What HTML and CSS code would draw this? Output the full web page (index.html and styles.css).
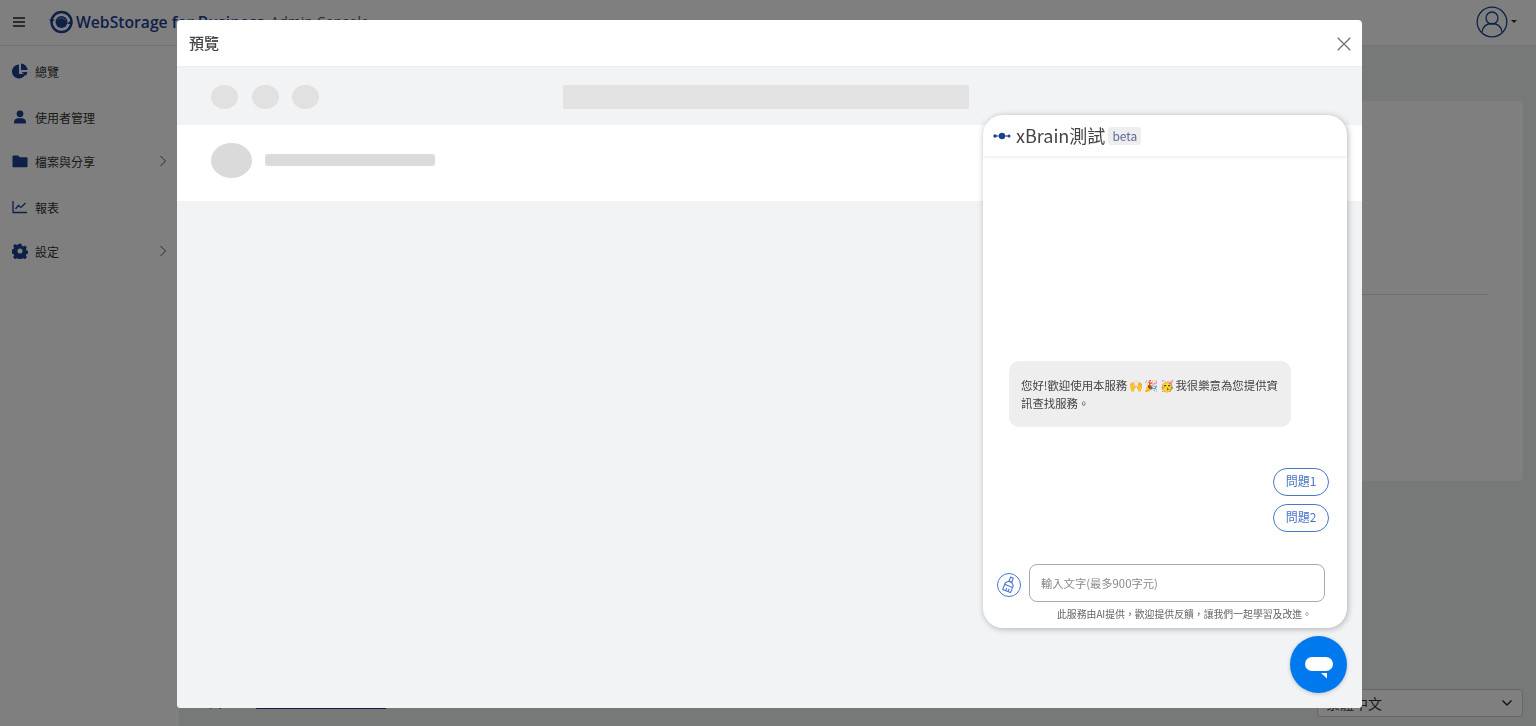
FILE: index.html
```html
<!DOCTYPE html>
<html lang="zh-Hant">
<head>
<meta charset="utf-8">
<title>WebStorage for Business Admin Console</title>
<link rel="stylesheet" href="styles.css">
</head>
<body>
<div class="app">
  <header class="topbar">
    <svg class="menu-icon" viewBox="0 0 12 10" width="12" height="10"><path d="M0 1h12M0 5h12M0 9h12" stroke="#222" stroke-width="1.6"/></svg>
    <svg class="logo" viewBox="0 0 24 24" width="24" height="24">
      <circle cx="12.500" cy="12" r="10" fill="none" stroke="#1d4191" stroke-width="2.400"/>
      <circle cx="12.500" cy="12" r="6" fill="#1d4191"/>
      <path d="M9 9.500a4.500 4.500 0 0 1 7.500 1" fill="none" stroke="#8a97b5" stroke-width=".9"/>
      <path d="M0 9.500l3 3 3-3zM18 14l3-3 3 3z" fill="#1d4191"/>
    </svg>
    <span class="brand">WebStorage for Business</span>
    <span class="brand-sub">Admin Console</span>
    <span class="top-spacer"></span>
    <svg class="avatar" viewBox="0 0 32 32" width="32" height="32">
      <circle cx="16" cy="16" r="14.800" fill="none" stroke="#1d4191" stroke-width="1.300"/>
      <circle cx="16" cy="12" r="6" fill="none" stroke="#1d4191" stroke-width="1.300"/>
      <path d="M6 26c1-6 5-8.500 10-8.500s9 2.500 10 8.500" fill="none" stroke="#1d4191" stroke-width="1.300"/>
    </svg>
    <span class="caret"></span>
  </header>
  <div class="layout">
    <nav class="sidebar">
      <a class="nav-item nav-a">
        <svg viewBox="0 0 16 16" width="16" height="16"><path d="M7 1.500a7 7 0 1 0 6.500 9.500H7z" fill="#1d4191"/><path d="M9 .5a7 7 0 0 1 6.500 6.500H9z" fill="#1d4191"/><path d="M9.500 9h5.800a7 7 0 0 1-1.400 3.800z" fill="#1d4191"/></svg>
        <span>總覽</span>
      </a>
      <a class="nav-item nav-b">
        <svg viewBox="0 0 16 16" width="16" height="16"><circle cx="8" cy="4.800" r="3.400" fill="#1d4191"/><path d="M2 14.500v-1.200C2 10.500 4 9.200 6 9.200h4c2 0 4 1.300 4 4.100v1.200z" fill="#1d4191"/></svg>
        <span>使用者管理</span>
      </a>
      <a class="nav-item nav-c">
        <svg viewBox="0 0 16 16" width="16" height="16"><path d="M1.500 2.500h4.700l1.500 1.700h6.800c.5 0 1 .5 1 1v8c0 .6-.5 1-1 1H1.500c-.5 0-1-.4-1-1V3.500c0-.5.5-1 1-1z" fill="#1d4191"/></svg>
        <span>檔案與分享</span>
        <svg class="chev" viewBox="0 0 8 12" width="8" height="12"><path d="M1.500 1l5 5-5 5" fill="none" stroke="#555" stroke-width="1"/></svg>
      </a>
      <a class="nav-item nav-d">
        <svg viewBox="0 0 16 16" width="16" height="16"><path d="M1 2v11.500h14" fill="none" stroke="#1d4191" stroke-width="1.300"/><path d="M3.500 10l3-3.500 2.500 2 4.500-4.500" fill="none" stroke="#1d4191" stroke-width="1.300"/></svg>
        <span>報表</span>
      </a>
      <a class="nav-item nav-e">
        <svg viewBox="0 0 16 16" width="16" height="16"><path fill-rule="evenodd" d="M6.600.8h2.800l.4 2 1.300.6 1.800-1 2 2-1 1.800.6 1.300 2 .4v2.800l-2 .4-.6 1.300 1 1.800-2 2-1.800-1-1.300.6-.4 2H6.600l-.4-2-1.300-.6-1.800 1-2-2 1-1.800-.6-1.300-2-.4V6.500l2-.4.6-1.300-1-1.800 2-2 1.800 1 1.300-.6zM8 5.500a2.500 2.500 0 1 0 0 5 2.500 2.500 0 0 0 0-5z" fill="#1d4191"/></svg>
        <span>設定</span>
        <svg class="chev" viewBox="0 0 8 12" width="8" height="12"><path d="M1.500 1l5 5-5 5" fill="none" stroke="#555" stroke-width="1"/></svg>
      </a>
    </nav>
    <main class="content">
      <section class="card"><div class="card-rule"></div></section>
      <div class="footer-row">
        <span class="foot-label">共 0</span>
        <span class="foot-link">隱私權政策與服務條款</span>
        <span class="foot-label">©</span>
        <span class="top-spacer"></span>
        <div class="lang-select">
          <span>繁體中文</span>
          <svg viewBox="0 0 12 8" width="12" height="8"><path d="M1.500 1.500L6 6l4.500-4.500" fill="none" stroke="#222" stroke-width="1.400"/></svg>
        </div>
      </div>
    </main>
  </div>
</div>
<div class="backdrop"></div>
<div class="modal">
  <div class="modal-head">
    <h1 class="modal-title">預覽</h1>
    <svg class="close" viewBox="0 0 14 14" width="14" height="14"><path d="M.7.7l12.600 12.600M13.300.7L.7 13.300" stroke="#777" stroke-width="1.400"/></svg>
  </div>
  <div class="modal-body">
    <div class="sk-bar">
      <i class="sk-dot"></i><i class="sk-dot"></i><i class="sk-dot"></i>
      <i class="sk-search"></i>
    </div>
    <div class="sk-row">
      <i class="sk-avatar"></i>
      <i class="sk-line"></i>
    </div>
    <section class="chat">
      <div class="chat-head">
        <svg class="chat-logo" viewBox="0 0 18 8" width="18" height="8"><path d="M1 4h16" stroke="#1d4191" stroke-width="1.200"/><circle cx="9" cy="4" r="3.200" fill="#1d4191"/><circle cx="2" cy="4" r="1.700" fill="#1d4191"/><circle cx="16" cy="4" r="1.500" fill="#1d4191"/></svg>
        <span class="chat-title">xBrain測試</span>
        <span class="beta">beta</span>
      </div>
      <div class="chat-body">
        <div class="bubble">您好!歡迎使用本服務 🙌 🎉 🥳 我很樂意為您提供資訊查找服務。</div>
        <div class="prompts">
          <button class="prompt">問題1</button>
          <button class="prompt">問題2</button>
        </div>
      </div>
      <div class="chat-input-row">
        <span class="broom">
          <svg viewBox="0 0 24 24" width="24" height="24">
            <circle cx="12" cy="12" r="11.500" fill="none" stroke="#4a76c8" stroke-width="1"/>
            <g transform="rotate(22 12 12)" fill="none" stroke="#4a76c8" stroke-width="1.100" stroke-linejoin="round">
              <path d="M10.500 4h3v4.500h-3z"/>
              <path d="M10.500 8.500h3l2.700 2.500v7.500H7.800V11z"/>
              <path d="M7.800 13h8.400M11 15.500v3M13.500 15.500v3"/>
            </g>
          </svg>
        </span>
        <div class="chat-input">輸入文字(最多900字元)</div>
      </div>
      <p class="chat-note">此服務由AI提供&#xFF0C;歡迎提供反饋&#xFF0C;讓我們一起學習及改進&#x3002;</p>
    </section>
    <button class="fab">
      <svg viewBox="0 0 28 22" width="28" height="22"><rect x="0" y="0" width="28" height="14" rx="7" fill="#fff"/><path d="M16 16h6v5.500z" fill="#fff"/></svg>
    </button>
  </div>
</div>
</body>
</html>
```

FILE: styles.css
```css
* { box-sizing: border-box; }
html, body { height: 100%; }
body {
  margin: 0;
  overflow: hidden;
  font-family: "Noto Sans CJK TC", "Noto Sans", sans-serif;
  color: #333;
  background: #eff2f1;
}
.app { height: 726px; display: flex; flex-direction: column; }
.topbar {
  height: 46px;
  flex: none;
  display: flex;
  align-items: center;
  padding: 0 19px 2px 13px;
  background: #fff;
  border-bottom: 1px solid #e6e6e6;
}
.menu-icon { margin-right: 24px; }
.logo { margin-right: 3px; }
.brand {
  font-family: "Open Sans", sans-serif;
  font-weight: 600;
  font-size: 15.700px;
  color: #1d4191;
}
.brand-sub {
  font-family: "Open Sans", sans-serif;
  font-size: 14px;
  color: #555;
  margin-left: 6px;
}
.top-spacer { flex: 1; }
.avatar { margin-right: 3px; }
.caret {
  width: 0;
  height: 0;
  border: 3.500px solid transparent;
  border-top-color: #333;
  border-bottom: 0;
}
.layout { flex: 1; display: flex; min-height: 0; }
.sidebar {
  width: 179px;
  flex: none;
  background: #fff;
  padding: 3px 12px 0 12px;
  display: flex;
  flex-direction: column;
}
.nav-item {
  display: flex;
  align-items: center;
  gap: 7px;
  height: 44px;
  font-size: 12px;
  color: #333;
}
.nav-item span { flex: 1; }
.nav-a { margin-bottom: 2px; }
.nav-c { margin-bottom: 2px; }
.chev { flex: none; }
.content {
  flex: 1;
  min-width: 0;
  display: flex;
  flex-direction: column;
  padding: 55px 13px 9px 0;
}
.card {
  height: 380px;
  flex: none;
  background: #fff;
  border-radius: 4px;
  padding-top: 193px;
}
.card-rule { margin-right: 35px; height: 1px; background: #ddd; }
.footer-row {
  margin-top: auto;
  display: flex;
  align-items: center;
  height: 28px;
  font-size: 13px;
  padding-left: 30px;
  gap: 8px;
}
.foot-link { color: #1d4191; text-decoration: underline; margin: 0 16px 3px 16px; }
.foot-label { margin-bottom: 3px; }
.lang-select {
  width: 206px;
  height: 28px;
  display: flex;
  align-items: center;
  justify-content: space-between;
  padding: 0 9px 0 8px;
  border: 1px solid #ccc;
  border-radius: 4px;
  font-size: 14px;
  background: #fff;
}
.backdrop {
  position: fixed;
  inset: 0;
  background: rgba(0, 0, 0, .5);
}
.modal {
  position: fixed;
  left: 177px;
  top: 20px;
  width: 1185px;
  height: 688px;
  background: #fff;
  border-radius: 4px;
  display: flex;
  flex-direction: column;
  overflow: hidden;
}
.modal-head {
  height: 47px;
  flex: none;
  display: flex;
  align-items: center;
  justify-content: space-between;
  padding: 0 11px 2px 12px;
  border-bottom: 1px solid #ebedf0;
}
.modal-title { margin: 0; font-size: 15px; font-weight: 500; color: #444; }
.close { margin-top: 4px; }
.modal-body { flex: 1; position: relative; background: #f2f3f5; }
.sk-bar {
  height: 58px;
  display: flex;
  align-items: flex-start;
  gap: 13.500px;
  padding: 18px 0 0 34px;
}
.sk-dot { width: 27px; height: 24px; border-radius: 50%; background: #e1e1e1; }
.sk-search { width: 406px; height: 24px; margin-left: 230px; border-radius: 2px; background: #e3e3e3; }
.sk-row {
  height: 76px;
  background: #fff;
  display: flex;
  align-items: center;
  gap: 13px;
  padding: 0 0 6px 34px;
}
.sk-avatar { width: 41px; height: 35px; border-radius: 50%; background: #dadada; }
.sk-line { width: 170px; height: 12px; border-radius: 3px; background: #dadada; }
.chat {
  position: absolute;
  left: 806px;
  top: 48px;
  width: 364px;
  height: 513px;
  background: #fff;
  border-radius: 20px;
  box-shadow: 1px 1px 6px rgba(0, 0, 0, .28);
  display: flex;
  flex-direction: column;
}
.chat-head {
  height: 41px;
  flex: none;
  display: flex;
  align-items: center;
  padding: 0 10px;
  box-shadow: 0 2px 3px rgba(0, 0, 0, .06);
}
.chat-logo { margin-right: 5px; }
.chat-title { font-size: 18px; color: #444; line-height: 1; padding-bottom: 2px; }
.beta {
  margin-left: 3px;
  width: 33px;
  height: 18px;
  border-radius: 3px;
  background: #eeeeee;
  color: #5d6a9a;
  font-size: 12px;
  line-height: 18px;
  text-align: center;
}
.chat-body {
  flex: 1;
  display: flex;
  flex-direction: column;
  justify-content: flex-end;
  padding: 0 18px 32px 26px;
}
.bubble {
  width: 282px;
  height: 66px;
  padding: 15px 12px 0;
  border-radius: 10px;
  background: #eee;
  font-size: 11.400px;
  line-height: 18px;
  word-spacing: -1px;
  color: #444;
  margin-bottom: 41px;
}
.prompts { display: flex; flex-direction: column; align-items: flex-end; gap: 8px; }
.prompt {
  width: 56px;
  height: 28px;
  padding: 0 0 3px;
  border: 1px solid #4a76c8;
  border-radius: 14px;
  background: #fff;
  color: #4a76c8;
  font: 12px "Noto Sans CJK TC", sans-serif;
}
.chat-input-row {
  flex: none;
  display: flex;
  align-items: center;
  gap: 8px;
  padding: 0 22px 0 14px;
}
.broom { height: 24px; margin-top: 4px; }
.chat-input {
  flex: 1;
  height: 38px;
  padding-left: 11px;
  border: 1px solid #aaa;
  border-radius: 8px;
  font-size: 11.300px;
  line-height: 36px;
  color: #888;
}
.chat-note {
  margin: 4px 0 6px 74px;
  font-size: 9.850px;
  line-height: 16px;
  color: #666;
  white-space: nowrap;
}
.fab {
  position: absolute;
  left: 1113px;
  top: 569px;
  width: 57px;
  height: 57px;
  padding: 6px 0 0;
  border: 0;
  border-radius: 50%;
  background: #0078ee;
  box-shadow: 0 1px 4px rgba(0, 0, 0, .2);
  display: flex;
  align-items: center;
  justify-content: center;
}
```
